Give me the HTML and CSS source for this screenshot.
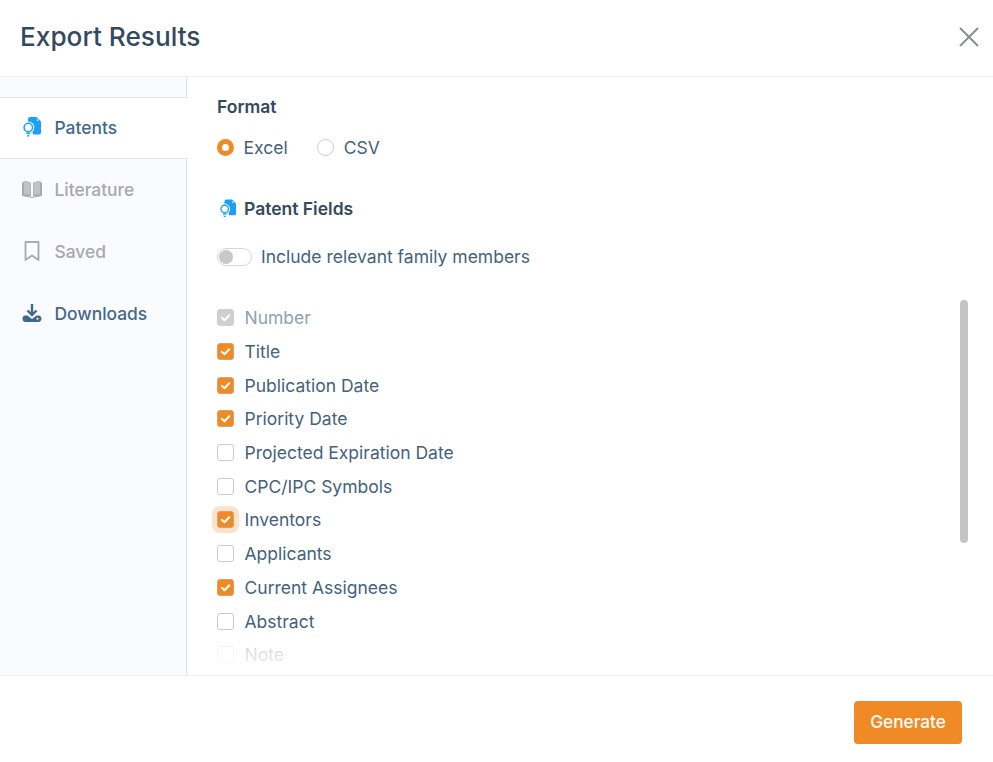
FILE: index.html
```html
<!DOCTYPE html>
<html lang="en">
<head>
  <meta charset="UTF-8" />
  <meta name="viewport" content="width=device-width, initial-scale=1" />
  <title>Export Results</title>
  <link rel="stylesheet" href="styles.css">
</head>
<body>
  <svg class="icon-defs" width="0" height="0" aria-hidden="true">
    <symbol id="patent-icon" viewBox="0 0 18 20">
      <path d="M7 0H13.500L18 4.500V15.500C18 16.600 17.100 17.500 16 17.500H5V3C5 1.300 5.500 0 7 0Z" fill="#1a9ffb" />
      <path d="M13.800 1.500L15.800 3.800H13.800Z" fill="#ffffff" />
      <circle cx="5.300" cy="10.500" r="6" fill="#ffffff" />
      <path d="M3.300 15.500H10V20H0Z" fill="#ffffff" />
      <circle cx="5.300" cy="10.500" r="4.200" fill="none" stroke="#1a9ffb" stroke-width="1.500" />
      <path d="M3.300 16.200H7.300M4.200 18.800H6.400" fill="none" stroke="#1a9ffb" stroke-width="1.500" />
    </symbol>
    <symbol id="check-mark" viewBox="0 0 17 17">
      <path d="M4.800 8.800L7.500 11.200L12.200 6.200" fill="none" stroke="#ffffff" stroke-width="2" stroke-linecap="round" stroke-linejoin="round" />
    </symbol>
  </svg>

  <div class="modal">
    <header class="modal-header">
      <h1>Export Results</h1>
      <button type="button" class="close-btn" aria-label="Close">
        <svg width="20" height="20" viewBox="0 0 20 20"><path d="M1 1L19 19M19 1L1 19" fill="none" stroke="#8a8f92" stroke-width="2" /></svg>
      </button>
    </header>

    <div class="modal-body">
      <nav class="sidebar">
        <div class="sidebar-top"></div>
        <a class="tab active">
          <svg class="tab-icon" width="18" height="20"><use href="#patent-icon" /></svg>
          Patents
        </a>
        <a class="tab muted">
          <svg class="tab-icon" width="20" height="18" viewBox="0 0 20 18">
            <path d="M0 2.500V15.500L9 16.500V2.800C6.500 1.300 3.500 1 1.500 1.200V2.500Z" fill="#a9a9a9" />
            <path d="M20 2.500V15.500L11 16.500V2.800C13.500 1.300 16.500 1 18.500 1.200V2.500Z" fill="#a9a9a9" />
            <path d="M2 1.800V14L8.500 14.800V3.200C6.500 2.200 4 1.700 2 1.800ZM18 1.800V14L11.500 14.800V3.200C13.500 2.200 16 1.700 18 1.800Z" fill="#c2c2c2" />
            <path d="M0 15.500L10 17.500L20 15.500" fill="none" stroke="#a9a9a9" stroke-width="1" />
          </svg>
          Literature
        </a>
        <a class="tab muted">
          <svg class="tab-icon" width="20" height="20" viewBox="0 0 20 20">
            <path d="M3.500 1H16.500V19L10 14.500L3.500 19Z" fill="none" stroke="#a9a9a9" stroke-width="1.800" stroke-linejoin="round" />
          </svg>
          Saved
        </a>
        <a class="tab">
          <svg class="tab-icon" width="20" height="20" viewBox="0 0 20 20">
            <path d="M10 1V11M5.500 7.500L10 12L14.500 7.500" fill="none" stroke="#44688a" stroke-width="2.400" />
            <path d="M3 12.500H5.500L10 16L14.500 12.500H16.500C18.300 12.500 19.500 14 19.500 15.800C19.500 17.600 18.200 19 16.500 19H3.500C1.700 19 .5 17.600 .5 15.800C.5 14 1.500 12.500 3 12.500Z" fill="#44688a" />
            <circle cx="15.500" cy="15.800" r="1" fill="#ffffff" />
          </svg>
          Downloads
        </a>
      </nav>

      <main class="content">
        <h2 class="section-title">Format</h2>
        <div class="radio-row">
          <label class="radio-item"><span class="radio checked"></span>Excel</label>
          <label class="radio-item"><span class="radio"></span>CSV</label>
        </div>

        <h2 class="section-title fields-title">
          <svg width="16" height="19"><use href="#patent-icon" /></svg>
          Patent Fields
        </h2>

        <label class="toggle-row"><span class="toggle"><span class="knob"></span></span>Include relevant family members</label>

        <ul class="field-list">
          <li class="field disabled"><span class="box locked"><svg width="17" height="17"><use href="#check-mark" /></svg></span>Number</li>
          <li class="field"><span class="box on"><svg width="17" height="17"><use href="#check-mark" /></svg></span>Title</li>
          <li class="field"><span class="box on"><svg width="17" height="17"><use href="#check-mark" /></svg></span>Publication Date</li>
          <li class="field"><span class="box on"><svg width="17" height="17"><use href="#check-mark" /></svg></span>Priority Date</li>
          <li class="field"><span class="box"></span>Projected Expiration Date</li>
          <li class="field"><span class="box"></span>CPC/IPC Symbols</li>
          <li class="field"><span class="box on focused"><svg width="17" height="17"><use href="#check-mark" /></svg></span>Inventors</li>
          <li class="field"><span class="box"></span>Applicants</li>
          <li class="field"><span class="box on"><svg width="17" height="17"><use href="#check-mark" /></svg></span>Current Assignees</li>
          <li class="field"><span class="box"></span>Abstract</li>
          <li class="field"><span class="box"></span>Note</li>
        </ul>
        <div class="list-fade"></div>
        <div class="scroll-thumb"></div>
      </main>
    </div>

    <footer class="modal-footer">
      <button type="button" class="generate-btn">Generate</button>
    </footer>
  </div>
</body>
</html>
```

FILE: styles.css
```css
* {
  box-sizing: border-box;
}
body {
  font-family: Inter, "Liberation Sans", sans-serif;
  background: #ffffff;
  color: #44617f;
  margin: 0;
  height: 762px;
  overflow: hidden;
}
.icon-defs {
  display: none;
}
.modal {
  display: flex;
  flex-direction: column;
  height: 100%;
  background: white;
}
.modal-header {
  display: flex;
  justify-content: space-between;
  align-items: center;
  height: 77px;
  padding: 0 14px 4px 20px;
  border-bottom: 1px solid #eceef2;
}
.modal-header h1 {
  margin: 0;
  font-size: 26.2px;
  font-weight: 500;
  color: #34495e;
}
.close-btn {
  display: flex;
  padding: 0;
  margin-top: 2px;
  background: none;
  border: none;
  cursor: pointer;
}
.modal-body {
  display: flex;
  height: 598px;
  overflow: hidden;
}
.sidebar {
  display: flex;
  flex-direction: column;
  flex: none;
  width: 187px;
  background: #fafbfe;
  border-right: 1px solid #dfe3e8;
}
.sidebar-top {
  height: 21px;
  margin-right: -1px;
  border-bottom: 1px solid #e2e6eb;
}
.tab {
  display: flex;
  align-items: center;
  gap: 12.500px;
  height: 62px;
  padding: 0 0 2px 22px;
  font-size: 17.400px;
  font-weight: 500;
  color: #44688a;
  cursor: pointer;
}
.tab-icon {
  flex: none;
  width: 20px;
}
.tab.active {
  height: 61px;
  margin-right: -1px;
  background: white;
  border-bottom: 1px solid #e2e6eb;
}
.tab.muted {
  color: #a9a9a9;
}
.content {
  position: relative;
  flex: 1;
  padding: 19px 0 0 30px;
}
.section-title {
  display: flex;
  align-items: center;
  margin: 0;
  font-size: 17.500px;
  font-weight: 600;
  color: #34495e;
}
.radio-row {
  display: flex;
  gap: 29.500px;
  margin-top: 20px;
}
.radio-item,
.toggle-row {
  display: flex;
  align-items: center;
  font-size: 17.500px;
}
.radio {
  width: 17px;
  height: 17px;
  margin-right: 9.500px;
  background: white;
  border: 1px solid #c9cdd1;
  border-radius: 50%;
}
.radio.checked {
  border: 5px solid #f08a24;
}
.fields-title {
  gap: 8px;
  margin-top: 40px;
  margin-left: 3px;
}
.toggle-row {
  gap: 9px;
  margin-top: 27px;
}
.toggle {
  display: flex;
  align-items: center;
  width: 35px;
  height: 18px;
  padding-left: 1px;
  border: 1px solid #d6d8da;
  border-radius: 9px;
}
.knob {
  width: 14px;
  height: 14px;
  background: #c8c8c8;
  border-radius: 50%;
}
.field-list {
  margin: 34px 0 0;
  padding: 0;
  list-style: none;
}
.field {
  display: flex;
  align-items: center;
  gap: 10.500px;
  height: 33.700px;
  font-size: 17.500px;
}
.field.disabled {
  color: #8fa1b3;
}
.box {
  display: flex;
  flex: none;
  width: 17px;
  height: 17px;
  background: white;
  border: 1px solid #c9cdd1;
  border-radius: 3px;
}
.box svg {
  flex: none;
  margin: -1px;
}
.box.on {
  background: #f08a24;
  border-color: #d9a271;
}
.box.locked {
  background: #cfcfcf;
  border-color: #cfcfcf;
}
.box.focused {
  box-shadow: 0 0 0 5px #fbe3cb;
}
.list-fade {
  position: absolute;
  left: 0;
  right: 0;
  bottom: 0;
  height: 36px;
  background: linear-gradient(rgba(255,255,255,0.72), rgba(255,255,255,0.95));
}
.scroll-thumb {
  position: absolute;
  top: 223px;
  left: 773px;
  width: 8px;
  height: 243px;
  background: #c4c4c4;
  border-radius: 4px;
}
.modal-footer {
  display: flex;
  justify-content: flex-end;
  align-items: flex-start;
  flex: 1;
  padding: 25px 31px 0 0;
  border-top: 1px solid #eceef2;
}
.generate-btn {
  width: 108px;
  height: 43px;
  padding: 0 0 2px;
  font-family: inherit;
  font-size: 17.200px;
  font-weight: 500;
  color: white;
  background: #f08a24;
  border: none;
  border-radius: 4px;
  cursor: pointer;
}
```
